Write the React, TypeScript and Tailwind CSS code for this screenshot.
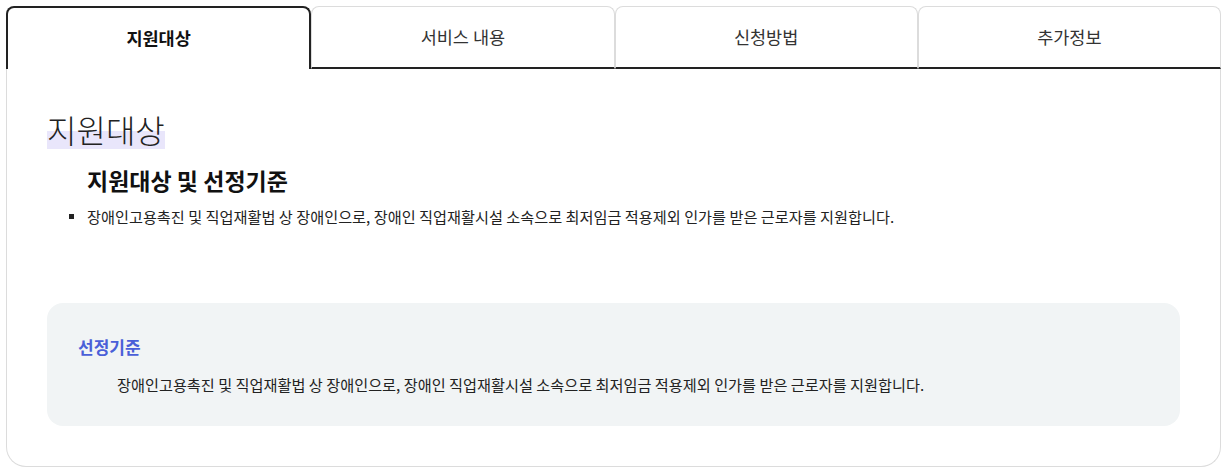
import React, { useState } from "react";

const tabs = ["지원대상", "서비스 내용", "신청방법", "추가정보"];

const desc =
  "장애인고용촉진 및 직업재활법 상 장애인으로, 장애인 직업재활시설 소속으로 최저임금 적용제외 인가를 받은 근로자를 지원합니다.";

export default function App() {
  const [active, setActive] = useState(0);

  return (
    <div
      className="bg-white px-[6px] pt-[6px] text-[#111]"
      style={{ fontFamily: '"Noto Sans CJK KR", "Noto Sans", sans-serif' }}
    >
      {/* 탭 */}
      <div className="flex h-[63px]">
        {tabs.map((t, i) =>
          i === active ? (
            <button
              key={t}
              onClick={() => setActive(i)}
              className="flex-1 rounded-t-[8px] border-2 border-b-0 border-[#222] bg-white text-[17.5px] font-bold text-[#111]"
            >
              {t}
            </button>
          ) : (
            <button
              key={t}
              onClick={() => setActive(i)}
              className="flex-1 rounded-t-[8px] border border-[#dcdcdc] border-b-2 border-b-[#222] bg-white text-[17.5px] text-[#333]"
            >
              {t}
            </button>
          )
        )}
      </div>

      {/* 내용 */}
      <div className="rounded-b-[20px] border border-t-0 border-[#dcdcdc] px-[40px] pb-[40px] pt-[40px]">
        <h2 className="inline-block bg-[linear-gradient(transparent_56%,#e9e6fb_56%)] text-[32px] font-light leading-[40px] text-[#222]">
          지원대상
        </h2>
        <h3 className="mt-[15px] pl-[40px] text-[23px] font-bold leading-[32px]">
          지원대상 및 선정기준
        </h3>
        <ul className="mt-[9px] pl-[22px]">
          <li className="flex items-center gap-[13px] text-[15.2px] leading-[22px] text-[#222]">
            <span className="h-[5px] w-[5px] shrink-0 bg-[#222]" />
            {desc}
          </li>
        </ul>

        <div className="mt-[76px] rounded-[16px] bg-[#f1f4f5] px-[31px] pb-[30px] pt-[30px]">
          <h4 className="text-[17px] font-bold leading-[28px] text-[#4a5fd8]">
            선정기준
          </h4>
          <p className="mt-[11px] pl-[39px] text-[15.2px] leading-[24px] text-[#222]">
            {desc}
          </p>
        </div>
      </div>
    </div>
  );
}
